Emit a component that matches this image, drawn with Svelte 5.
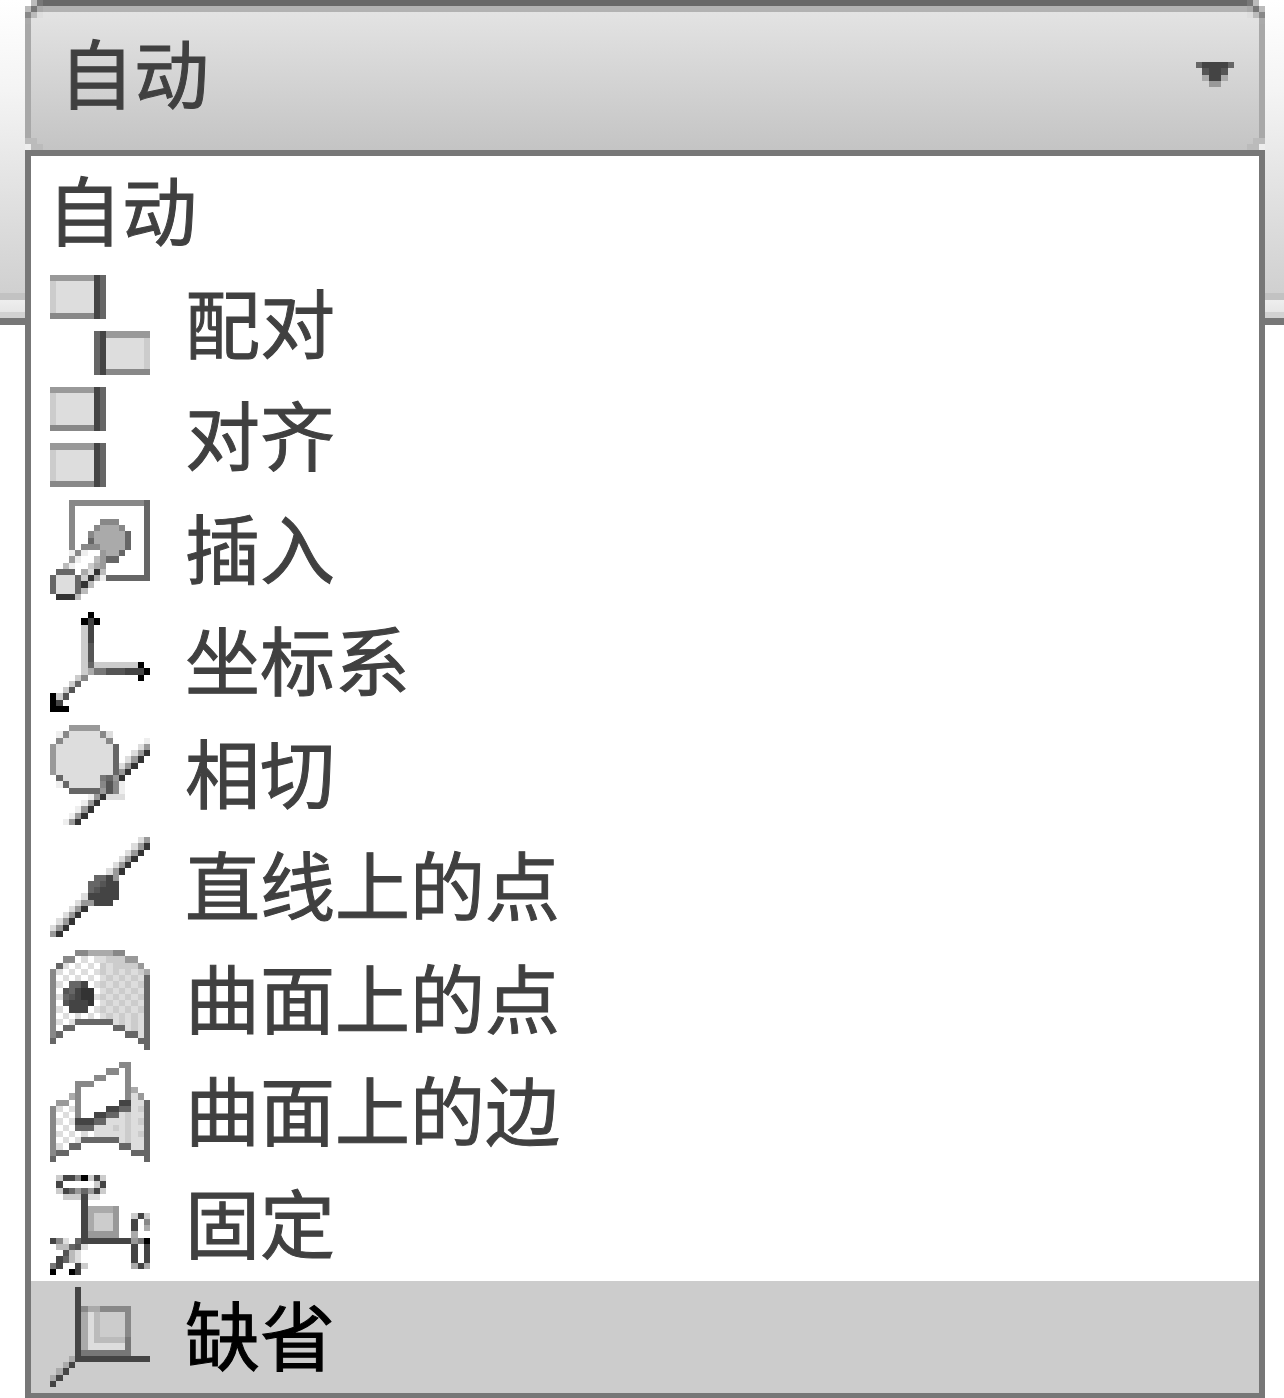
<script>
  // Icons are 16x16 grey bitmaps: one hex digit per pixel, "." is transparent
  const icons = {
    match: [
      "999999946.......", "cdddddd46.......", "cdddddd46.......", "cdddddd46.......",
      "cdddddd46.......", "cdddddd46.......", "888888846.......", "................",
      "................", ".......649999999", ".......64ddddddc", ".......64ddddddc",
      ".......64ddddddc", ".......64ddddddc", ".......64ddddddc", ".......648888888"
    ],
    align: [
      "999999946.......", "cdddddd46.......", "cdddddd46.......", "cdddddd46.......",
      "cdddddd46.......", "cdddddd46.......", "888888846.......", "................",
      "................", "999999946.......", "cdddddd46.......", "cdddddd46.......",
      "cdddddd46.......", "cdddddd46.......", "cdddddd46.......", "888888846......."
    ],
    insert: [
      "...8888888888886", "...8...........6", "...8...........6", "...8....888....6",
      "...8...8aaa8...6", "...8..8aaaaa6..6", "...8..6aaaaa6..6", "...8.888aaaa6..6",
      "...e8e..9aa6...6", "...9e..b966....6", "..be..ca9......6", ".666.ad3b......6",
      "6ddd6c3ae6666666", "6ddd63b.........", "6ddd6b..........", ".333b..........."
    ],
    csys: [
      "......0.........", ".....040........", ".....c4f........", ".....c4f........",
      ".....c4f........", ".....c5f........", ".....c5f........", ".....c5f........",
      ".....c6ccccccc0.", ".....ca775554440", "....c8ffffffff0.", "...c6...........",
      "..c5............", "0c5.............", "04..............", "000............."
    ],
    tangent: [
      "...99999........", ".e8ddddd8d......", ".8ddddddd8.....e", "9ddddddddd6...d9",
      "9ddddddddd6..d93", "9ddddddddd6.d93.", "9ddddddddd6d93..", "9ddddddddd693...",
      ".6dddddd7693....", ".e6ddddd858e....", "...66666958e....", "......e93ddd....",
      ".....e93........", "....e93.........", "...e93..........", "..e93..........."
    ],
    linePoint: [
      "..............d9", ".............d93", "............d93.", "...........d93..",
      "..........d93...", ".........d93....", ".......6649.....", "......66544.....",
      "......65444.....", ".....d44444.....", "....d99444......", "...d93..........",
      "..d93...........", ".d93............", "d93.............", "93.............."
    ],
    surfacePoint: [
      "....88aaaa88....", "..88.d.ddccc99..", ".6d.d.d.cdcccc9.", "8d.d.d.dcdcdcdca",
      "8.d.d.d.dcdcdcd6", "8d.664.dcdcdcdc6", "8.56433.dcdcdcd6", "8d65433dcdcdcdc6",
      "8.54443.dcdcdcd6", "8d.444.dcdcdcdc6", "8.d.d.d.dcdcdcd6", "8d.d666666dcdcd6",
      "8.66......66dcd6", "86..........66d6", "6.............66", "...............6"
    ],
    surfaceEdge: [
      "...........88...", ".........88.8...", ".......88...8...", "....888.....8...",
      "....8.......8a..", "...a8.......8d9.", ".99.8......44dd6", "8d.d8....4466dc6",
      "8.d.8..4466dcdd6", "8d.d44466dddcdc6", "8.d.666dddcdcdd6", "8d.d.d.dddddcdc6",
      "8.d.d666666dcdd6", "8d.66......66dd6", "866..........666", "6..............6"
    ],
    fix: [
      ".c4480c4c.......", ".4.....c4.......", ".c469694c.......", "..ccc4dd........",
      ".....4..........", ".....4aaaa9.....", ".....4accc9..c4c", ".....4accc9..4.8",
      ".....4accc9..4.a", ".....499999..a..", "48d.644444444970", ".bb65d.......4.4",
      "..5bd........4.4", ".46bd........4.4", "74..4c.......a4a", "0..04..........."
    ],
    fallback: [
      "....4...........", "....4...........", "....4...........", "....48aa88888...",
      "....4adb....8...", "....4adb....8...", "....4adb....8...", "....4adb....8...",
      "....4adbbbbb7...", "....4adddddd7...", "....477777777...", "...a444444444444",
      "..a4............", ".a4.............", "a4..............", "4..............."
    ]
  };

  const arrow = ["644446", ".5445.", ".a44a.", "..99.."];
  const corner = ["fb7", "b7a", "8bd", "a.."];
  const foot = ["bb.", "ebb"];

  const options = [
    { id: "auto", label: "自动" },
    { id: "match", label: "配对" },
    { id: "align", label: "对齐" },
    { id: "insert", label: "插入" },
    { id: "csys", label: "坐标系" },
    { id: "tangent", label: "相切" },
    { id: "linePoint", label: "直线上的点" },
    { id: "surfacePoint", label: "曲面上的点" },
    { id: "surfaceEdge", label: "曲面上的边" },
    { id: "fix", label: "固定" },
    { id: "fallback", label: "缺省" }
  ];

  let value = $state("auto");
  let highlighted = $state("fallback");

  // Merge equal neighbours on a row into one rect
  function toRuns(rows) {
    const runs = [];
    rows.forEach((row, y) => {
      let x = 0;
      while (x < row.length) {
        const c = row[x];
        let end = x + 1;
        while (row[end] === c) end++;
        if (c !== ".") runs.push({ x, y, w: end - x, fill: `#${c}${c}${c}` });
        x = end;
      }
    });
    return runs;
  }
</script>

{#snippet bitmap(rows, name)}
  <svg
    class={name}
    viewBox="0 0 {rows[0].length} {rows.length}"
    preserveAspectRatio="none"
    shape-rendering="crispEdges"
    aria-hidden="true"
  >
    {#each toRuns(rows) as r}
      <rect x={r.x} y={r.y} width={r.w} height="1" fill={r.fill} />
    {/each}
  </svg>
{/snippet}

<div class="toolbar">
  <div class="field">
    <select bind:value aria-label="约束类型">
      {#each options as option}
        <option value={option.id}>{option.label}</option>
      {/each}
    </select>
    {@render bitmap(arrow, "arrow")}
    {@render bitmap(corner, "corner left")}
    {@render bitmap(corner, "corner right")}
    {@render bitmap(foot, "foot left")}
    {@render bitmap(foot, "foot right")}
  </div>

  <div class="list" role="listbox" aria-label="约束类型">
    {#each options as option}
      <button
        class="option"
        class:highlighted={highlighted === option.id}
        role="option"
        aria-selected={value === option.id}
        onmouseenter={() => (highlighted = option.id)}
        onclick={() => (value = option.id)}
      >
        {#if icons[option.id]}
          {@render bitmap(icons[option.id], "icon")}
        {/if}
        <span class="label">{option.label}</span>
      </button>
    {/each}
  </div>
</div>

<style>
  :global(body) {
    background: #fff;
  }

  .toolbar {
    padding: 0 19px 0 25px;
    background: linear-gradient(
      #fff 0,
      #f4f4f4 90px,
      #d0d0d0 293px,
      #c2c2c2 293px,
      #c2c2c2 300px,
      #eee 300px,
      #e6e6e6 312px,
      #d2d2d2 312px,
      #d2d2d2 318px,
      #777 318px,
      #777 325px,
      #fff 325px
    );
  }

  .field {
    position: relative;
  }

  select,
  .option {
    font-family: "Noto Sans CJK SC", sans-serif;
    font-size: 75px;
    color: #404040;
    -webkit-text-stroke: 1px currentColor;
  }

  select {
    display: block;
    appearance: none;
    box-sizing: border-box;
    width: 100%;
    height: 150px;
    margin: 0;
    padding: 0 80px 16px 28px;
    border: solid #a8a8a8;
    border-width: 6px 6px 0;
    border-top-color: #686868;
    border-radius: 0;
    outline: none;
    background: linear-gradient(#b2b2b2 6px, #e3e3e3 6px, #c4c4c4);
  }

  .arrow {
    position: absolute;
    top: 62px;
    right: 31px;
    width: 38px;
    height: 25px;
    pointer-events: none;
  }

  .corner,
  .foot {
    position: absolute;
    width: 18px;
    pointer-events: none;
  }

  .corner {
    top: 0;
    height: 24px;
  }

  .foot {
    bottom: 0;
    height: 12px;
  }

  .left {
    left: 0;
  }

  .right {
    right: 0;
    transform: scaleX(-1);
  }

  .list {
    border: 6px solid #777;
    border-bottom-width: 5px;
    background: #fff;
  }

  .option {
    display: flex;
    align-items: center;
    width: 100%;
    height: 112px;
    margin: 0;
    padding: 0 16px;
    border: none;
    background: transparent;
    text-align: left;
    white-space: nowrap;
  }

  .option:nth-child(even) {
    height: 113px;
  }

  .option.highlighted {
    background: #ccc;
    color: #000;
  }

  .icon {
    flex: none;
    width: 100px;
    height: 100px;
    margin: 0 35px 0 3px;
  }

  .label {
    padding-bottom: 8px;
    line-height: 104px;
  }
</style>
